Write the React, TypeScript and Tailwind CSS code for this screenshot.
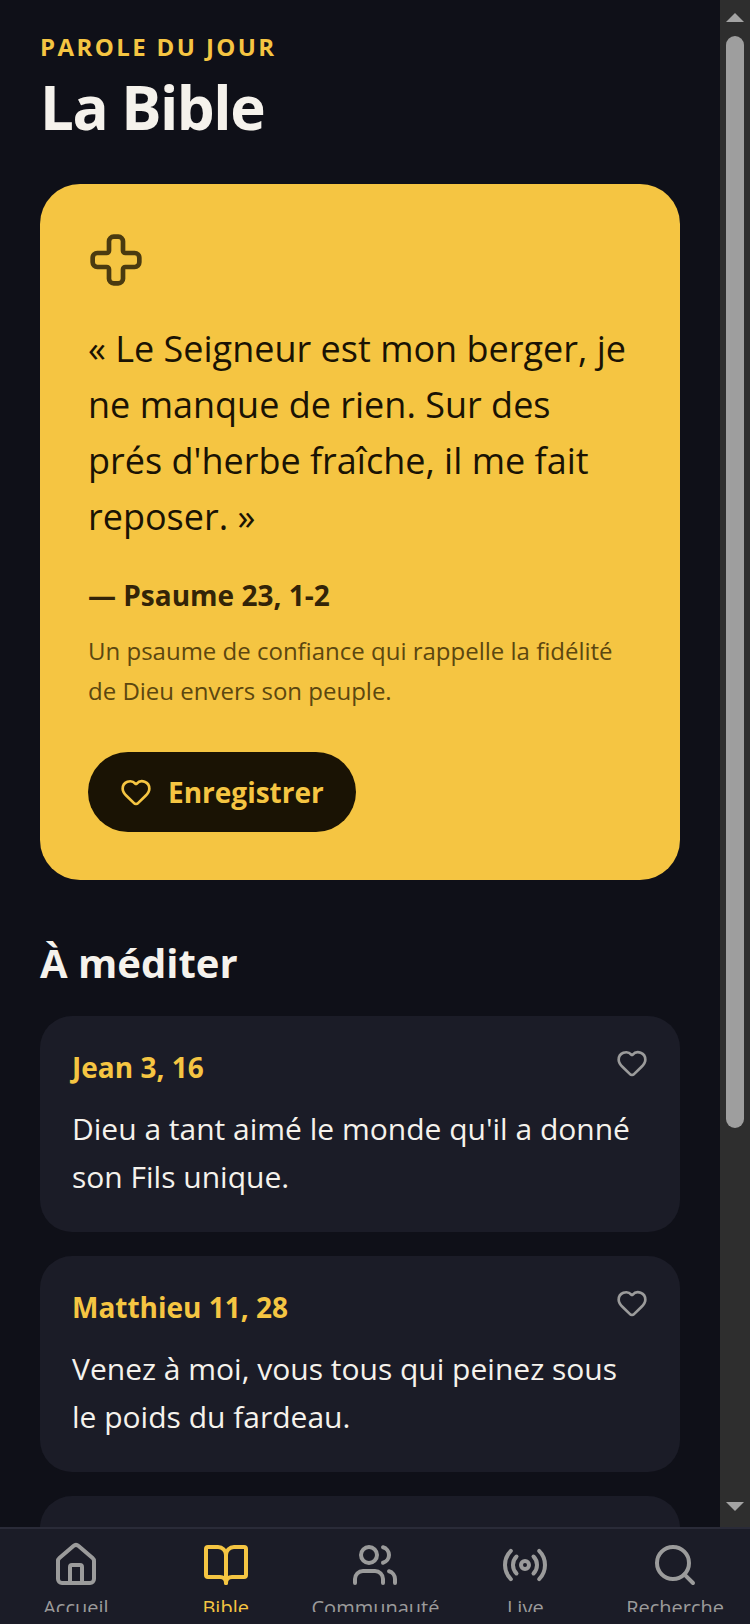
import { BookOpen, Cross, Heart, House, Radio, Search, Users } from "lucide-react";

const verses = [
  { ref: "Jean 3, 16", text: "Dieu a tant aimé le monde qu'il a donné son Fils unique." },
  { ref: "Matthieu 11, 28", text: "Venez à moi, vous tous qui peinez sous le poids du fardeau." },
  { ref: "Psaume 119, 105", text: "Ta parole est une lampe pour mes pas." },
];

const tabs = [
  { label: "Accueil", Icon: House, active: false },
  { label: "Bible", Icon: BookOpen, active: true },
  { label: "Communauté", Icon: Users, active: false },
  { label: "Live", Icon: Radio, active: false },
  { label: "Recherche", Icon: Search, active: false },
];

export default function App() {
  return (
    <div className="flex h-[1624px] w-[750px] flex-col overflow-hidden bg-[#0f1018] font-['Open_Sans',sans-serif]">
      <div className="flex min-h-0 flex-1">
        <main className="min-w-0 flex-1 overflow-hidden px-10 pt-[27px]">
          <p className="text-[24px] leading-[40px] font-bold tracking-[0.1em] text-[#f5c542]">PAROLE DU JOUR</p>
          <h1 className="mt-[4px] text-[60px] leading-[72px] font-bold tracking-tight text-[#f5f2ec]">La Bible</h1>

          <section className="mt-[41px] rounded-[40px] bg-[#f5c542] p-12 text-[#1a1304]">
            <Cross size={56} strokeWidth={2} className="text-[#4a3a10]" />
            <p className="mt-[33px] text-[36px] leading-[56px]">
              « Le Seigneur est mon berger, je ne manque de rien. Sur des prés d'herbe fraîche, il me fait reposer. »
            </p>
            <p className="mt-[30px] text-[28px] leading-[40px] font-bold text-[#332408]">— Psaume 23, 1-2</p>
            <p className="mt-4 text-[24px] leading-[40px] text-[#5c4710]">
              Un psaume de confiance qui rappelle la fidélité de Dieu envers son peuple.
            </p>
            <button className="mt-[41px] flex h-20 items-center gap-4 rounded-full bg-[#1a1304] px-8 text-[28px] font-bold text-[#f5c542]">
              <Heart size={32} strokeWidth={2} />
              Enregistrer
            </button>
          </section>

          <h2 className="mt-[53px] text-[40px] leading-[60px] font-bold text-[#f5f2ec]">À méditer</h2>

          <div className="mt-[23px] flex flex-col gap-6">
            {verses.map((v) => (
              <article key={v.ref} className="rounded-[32px] bg-[#1b1c27] px-8 pt-[31px] pb-[31px]">
                <div className="flex items-start justify-between">
                  <h3 className="text-[28px] leading-[40px] font-bold text-[#f5c542]">{v.ref}</h3>
                  <Heart size={32} strokeWidth={2} className="text-[#9b9b9b]" />
                </div>
                <p className="mt-[18px] text-[30px] leading-[48px] text-[#f5f2ec]">{v.text}</p>
              </article>
            ))}
          </div>
        </main>

        <div className="flex w-[30px] shrink-0 flex-col items-center bg-[#2e2e2e]">
          <svg width="18" height="9" viewBox="0 0 18 9" className="mt-[13px] shrink-0">
            <path d="M9 0 18 9H0z" fill="#a3a3a3" />
          </svg>
          <div className="mt-[14px] h-[1092px] w-[18px] shrink-0 rounded-full bg-[#9e9e9e]" />
          <div className="flex-1" />
          <svg width="18" height="9" viewBox="0 0 18 9" className="mb-[16px] shrink-0">
            <path d="M0 0H18L9 9z" fill="#a3a3a3" />
          </svg>
        </div>
      </div>

      <nav className="flex h-[97px] shrink-0 border-t-2 border-[#2a2b38] bg-[#1b1c27] pt-[12px] pl-[1px]">
        {tabs.map(({ label, Icon, active }) => (
          <div key={label} className={`flex flex-1 flex-col items-center ${active ? "text-[#f5c542]" : "text-[#9b9b9b]"}`}>
            <Icon size={48} strokeWidth={2} className="shrink-0" />
            <div className="mt-[4px] h-[19px] overflow-hidden">
              <span className="block text-[20px] leading-[30px]">{label}</span>
            </div>
          </div>
        ))}
      </nav>
    </div>
  );
}
